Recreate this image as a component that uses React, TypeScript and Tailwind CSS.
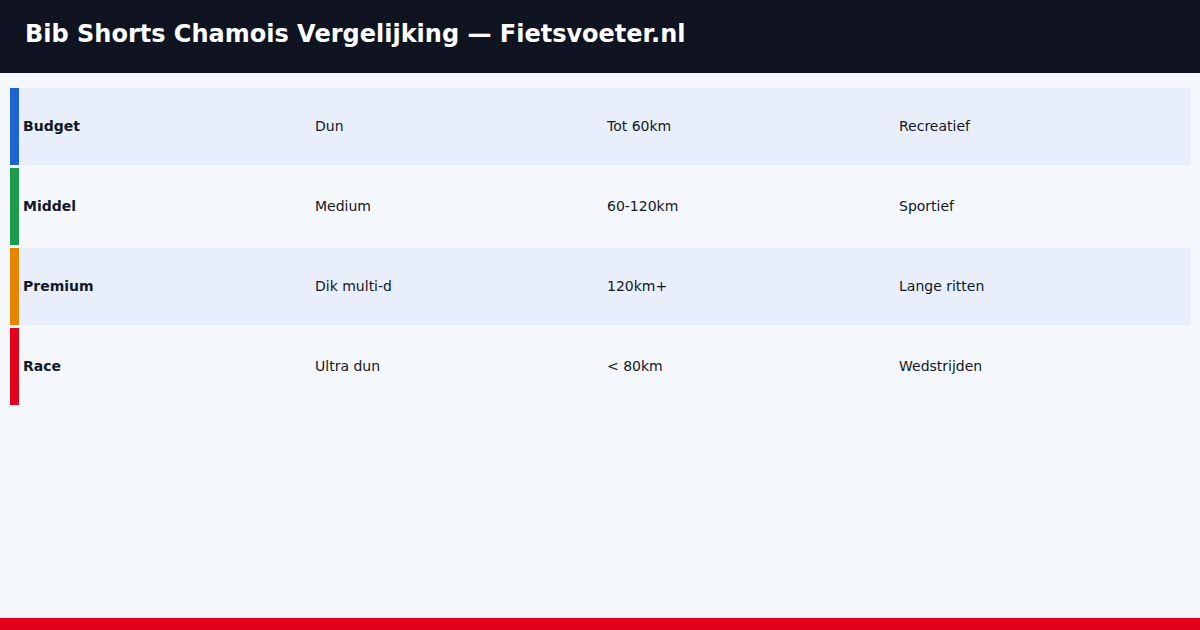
const rows = [
  { name: 'Budget', a: 'Dun', b: 'Tot 60km', c: 'Recreatief', bar: 'bg-[#1b64d1]', bg: 'bg-[#e8effb]' },
  { name: 'Middel', a: 'Medium', b: '60-120km', c: 'Sportief', bar: 'bg-[#1d9d4c]', bg: 'bg-[#f4f7fc]' },
  { name: 'Premium', a: 'Dik multi-d', b: '120km+', c: 'Lange ritten', bar: 'bg-[#e58500]', bg: 'bg-[#e8effb]' },
  { name: 'Race', a: 'Ultra dun', b: '< 80km', c: 'Wedstrijden', bar: 'bg-[#e2001a]', bg: 'bg-[#f4f7fc]' },
];

export default function App() {
  return (
    <div className="w-[1200px] h-[630px] flex flex-col bg-[#f4f7fc] font-['DejaVu_Sans',sans-serif] text-[#111827]">
      <header className="h-[73px] shrink-0 bg-[#0f1420] flex items-center pl-[25px] pb-[6px]">
        <h1 className="text-[24px] font-bold text-white leading-none">
          Bib Shorts Chamois Vergelijking — Fietsvoeter.nl
        </h1>
      </header>

      <main className="flex-1 pt-[15px] pl-[10px] flex flex-col gap-[3px]">
        {rows.map(row => (
          <div key={row.name} className={`flex h-[77px] w-[1181px] ${row.bg}`}>
            <div className={`w-[9px] shrink-0 ${row.bar}`} />
            <div className="grid grid-cols-[292px_292px_292px_292px] items-center pl-[4px] pb-[1px] text-[14px]">
              <span className="font-bold">{row.name}</span>
              <span>{row.a}</span>
              <span>{row.b}</span>
              <span>{row.c}</span>
            </div>
          </div>
        ))}
      </main>

      <div className="h-[12px] shrink-0 bg-[#e3001b]" />
    </div>
  );
}
